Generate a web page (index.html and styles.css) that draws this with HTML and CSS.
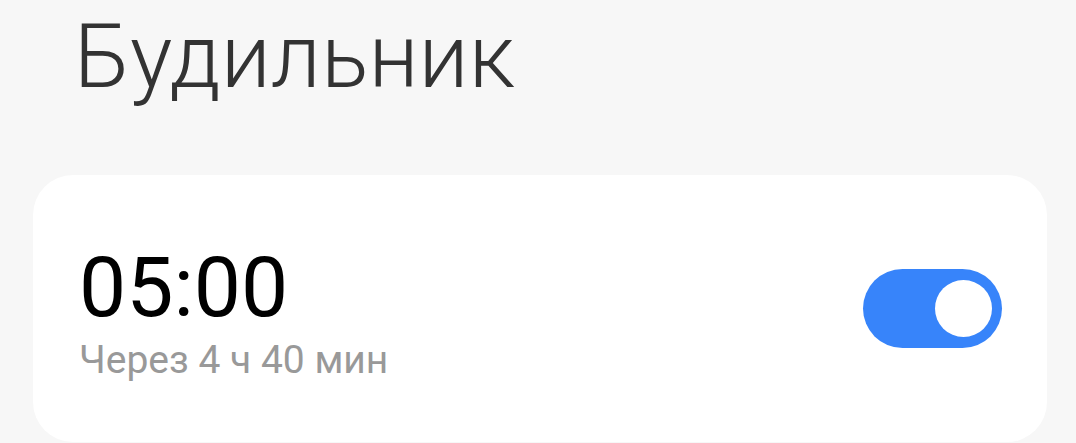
FILE: index.html
```html
<!DOCTYPE html>
<html lang="ru">
<head>
<meta charset="utf-8">
<link rel="stylesheet" href="styles.css">
</head>
<body>
<div class="page">
  <h1 class="title">Будильник</h1>
  <div class="card">
    <div class="info">
      <div class="time">05:00</div>
      <div class="sub">Через 4 ч 40 мин</div>
    </div>
    <div class="toggle"><div class="knob"></div></div>
  </div>
</div>
</body>
</html>
```
FILE: styles.css
```css
html, body {
  margin: 0;
  padding: 0;
  background: #f7f7f7;
  font-family: Roboto, "Noto Sans", sans-serif;
}
.page {
  padding: 0 29px 0 33px;
  overflow: hidden;
  height: 443px;
}
.title {
  margin: 0;
  padding: 4px 0 0 41px;
  font-weight: 300;
  font-size: 89px;
  line-height: 106px;
  color: #333333;
  letter-spacing: 0;
}
.card {
  margin-top: 65px;
  height: 267px;
  background: #ffffff;
  border-radius: 40px;
  display: flex;
  align-items: center;
  justify-content: space-between;
  padding: 0 45px 0 46px;
}
.info {
  display: flex;
  flex-direction: column;
  padding-top: 10px;
}
.time {
  font-size: 84px;
  line-height: 86px;
  color: #000;
  font-weight: 400;
}
.sub {
  font-size: 39px;
  line-height: 46px;
  color: #999999;
  margin-top: 6px;
}
.toggle {
  width: 139px;
  height: 79px;
  border-radius: 40px;
  background: #3784fa;
  display: flex;
  align-items: center;
  justify-content: flex-end;
  padding-right: 10px;
  box-sizing: border-box;
}
.knob {
  width: 57px;
  height: 57px;
  border-radius: 50%;
  background: #fff;
}
```
